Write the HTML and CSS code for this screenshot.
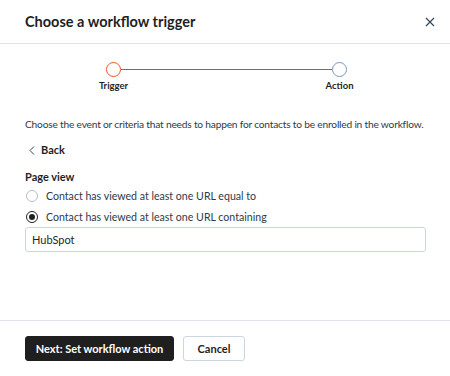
FILE: index.html
```html
<!DOCTYPE html>
<html lang="en">
<head>
    <meta charset="UTF-8">
    <meta name="viewport" content="width=device-width, initial-scale=1.0">
    <title>Choose a workflow trigger</title>
    <link rel="stylesheet" href="styles.css">
</head>
<body>
    <div class="modal">
        <div class="modal-header">
            <h2 class="modal-title">Choose a workflow trigger</h2>
            <button class="modal-close" aria-label="Close">
                <svg width="10" height="10" viewBox="0 0 10 10">
                    <path d="M1 1L9 9M9 1L1 9" stroke="#33475b" stroke-width="1.2" fill="none"/>
                </svg>
            </button>
        </div>

        <div class="modal-body">
            <div class="stepper">
                <div class="step">
                    <span class="step-dot step-dot-active"></span>
                    <span class="step-label">Trigger</span>
                </div>
                <div class="step-line"></div>
                <div class="step">
                    <span class="step-dot"></span>
                    <span class="step-label">Action</span>
                </div>
            </div>

            <p class="intro">Choose the event or criteria that needs to happen for contacts to be enrolled in the workflow.</p>

            <a class="back-link" href="#">
                <svg width="6" height="9" viewBox="0 0 6 9">
                    <path d="M5 0.5L1 4.5L5 8.5" stroke="#33475b" stroke-width="1" fill="none"/>
                </svg>
                Back
            </a>

            <div class="form-group">
                <div class="form-label">Page view</div>
                <label class="radio-row">
                    <input type="radio" name="rule" class="radio-input">
                    <span class="radio-mark"></span>
                    Contact has viewed at least one URL equal to
                </label>
                <label class="radio-row">
                    <input type="radio" name="rule" class="radio-input" checked>
                    <span class="radio-mark"></span>
                    Contact has viewed at least one URL containing
                </label>
                <input type="text" class="form-control" value="HubSpot">
            </div>
        </div>

        <div class="modal-footer">
            <button type="button" class="btn btn-primary">Next: Set workflow action</button>
            <button type="button" class="btn btn-secondary">Cancel</button>
        </div>
    </div>
</body>
</html>
```

FILE: styles.css
```css
/* Base */
* {
    margin: 0;
    padding: 0;
    box-sizing: border-box;
}

body {
    font-family: Lato, "Noto Sans", Arial, sans-serif;
    background-color: #ffffff;
    color: #1f1f1f;
    width: 450px;
    height: 376px;
    overflow: hidden;
}

/* Modal */
.modal {
    display: flex;
    flex-direction: column;
    height: 100%;
}

.modal-header {
    height: 44px;
    padding: 0 15px 0 25px;
    border-bottom: 1px solid #dfe3eb;
    display: flex;
    justify-content: space-between;
    align-items: center;
}

.modal-title {
    font-size: 14.5px;
    font-weight: 700;
    color: #1f1f1f;
}

.modal-close {
    background: transparent;
    border: none;
    width: 10px;
    height: 10px;
    cursor: pointer;
    display: flex;
}

.modal-body {
    flex: 1;
    padding: 0 24px 0 25px;
}

/* Stepper */
.stepper {
    display: flex;
    align-items: flex-start;
    margin: 18px 79px 0 81px;
}

.step {
    width: 15px;
    display: flex;
    flex-direction: column;
    align-items: center;
}

.step-dot {
    width: 15px;
    height: 15px;
    border-radius: 50%;
    border: 1.5px solid #7c98b6;
    background: #ffffff;
}

.step-dot-active {
    border-color: #e8562a;
}

.step-line {
    flex: 1;
    height: 1px;
    margin-top: 7px;
    background-color: #707070;
}

.step-label {
    margin-top: 3px;
    font-size: 9.5px;
    line-height: 12px;
    font-weight: 700;
    white-space: nowrap;
}

/* Content */
.intro {
    margin-top: 24px;
    font-size: 10.2px;
    letter-spacing: -0.2px;
    line-height: 16px;
    color: #2e3a46;
    white-space: nowrap;
}

.back-link {
    display: flex;
    align-items: center;
    gap: 6px;
    margin-top: 10px;
    padding-left: 4px;
    font-size: 11px;
    line-height: 16px;
    font-weight: 700;
    color: #1f1f1f;
    text-decoration: none;
}

.form-group {
    margin-top: 11px;
    display: flex;
    flex-direction: column;
    gap: 1px;
}

.form-label {
    font-size: 11px;
    line-height: 16px;
    font-weight: 700;
}

.radio-row {
    display: flex;
    align-items: center;
    gap: 8px;
    height: 20px;
    padding-left: 1px;
    font-size: 10.6px;
    color: #2e3a46;
    cursor: pointer;
}

.radio-input {
    display: none;
}

.radio-mark {
    width: 12px;
    height: 12px;
    border-radius: 50%;
    border: 1px solid #b5bcc4;
    display: flex;
    align-items: center;
    justify-content: center;
}

.radio-input:checked + .radio-mark {
    border-color: #1f1f1f;
}

.radio-input:checked + .radio-mark::after {
    content: "";
    width: 6px;
    height: 6px;
    border-radius: 50%;
    background-color: #1f1f1f;
}

.form-control {
    width: 100%;
    height: 25px;
    margin-top: -1px;
    padding: 0 6px;
    font-family: inherit;
    font-size: 11px;
    color: #1f1f1f;
    background-color: #ffffff;
    border: 1px solid #cbd6e2;
    border-radius: 3px;
}

/* Footer */
.modal-footer {
    height: 56px;
    padding: 15px 25px 0;
    border-top: 1px solid #dfe3eb;
    display: flex;
    align-items: flex-start;
    gap: 9px;
}

.btn {
    height: 25px;
    padding: 0;
    font-family: inherit;
    font-size: 11px;
    font-weight: 700;
    white-space: nowrap;
    border-radius: 3px;
    cursor: pointer;
}

.btn-primary {
    width: 149px;
    background-color: #1f1f1f;
    color: #ffffff;
    border: 1px solid #1f1f1f;
}

.btn-secondary {
    width: 62px;
    background-color: #ffffff;
    color: #1f1f1f;
    border: 1px solid #cbd6e2;
}
```
